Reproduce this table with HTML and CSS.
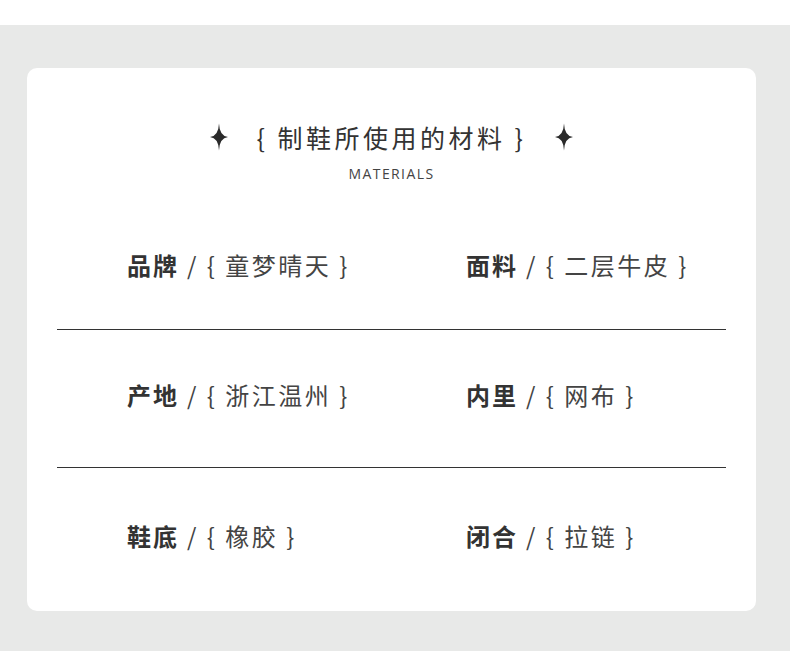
FILE: index.html
```html
<!DOCTYPE html>
<html lang="zh">
<head>
<meta charset="utf-8">
<link rel="stylesheet" href="styles.css">
</head>
<body>
<div class="band">
  <div class="card">
    <div class="header">
      <div class="title-row">
        <svg class="star" viewBox="0 0 20 30"><path d="M10 0 Q10.6 14 20 15 Q10.6 16 10 30 Q9.4 16 0 15 Q9.4 14 10 0Z"/></svg>
        <h1 class="title">{ 制鞋所使用的材料 }</h1>
        <svg class="star" viewBox="0 0 20 30"><path d="M10 0 Q10.6 14 20 15 Q10.6 16 10 30 Q9.4 16 0 15 Q9.4 14 10 0Z"/></svg>
      </div>
      <div class="subtitle">MATERIALS</div>
    </div>
    <div class="rows">
      <div class="row first">
        <div class="item"><span class="label">品牌</span><span class="value">/ { 童梦晴天 }</span></div>
        <div class="item"><span class="label">面料</span><span class="value">/ { 二层牛皮 }</span></div>
      </div>
      <div class="row">
        <div class="item"><span class="label">产地</span><span class="value">/ { 浙江温州 }</span></div>
        <div class="item"><span class="label">内里</span><span class="value">/ { 网布 }</span></div>
      </div>
      <div class="row last">
        <div class="item"><span class="label">鞋底</span><span class="value">/ { 橡胶 }</span></div>
        <div class="item"><span class="label">闭合</span><span class="value">/ { 拉链 }</span></div>
      </div>
    </div>
  </div>
</div>
</body>
</html>
```
FILE: styles.css
```css
* { box-sizing: border-box; }
html, body { margin: 0; padding: 0; background: #ffffff; }
body {
  font-family: "Noto Sans CJK SC", "Noto Sans", sans-serif;
  color: #333;
}
.band {
  margin-top: 25px;
  height: 626px;
  background: #e8e9e8;
  padding: 43px 34px 0 27px;
}
.card {
  background: #ffffff;
  border-radius: 10px;
  height: 543px;
  padding: 51px 30px 0;
}
.header {
  display: flex;
  flex-direction: column;
  align-items: center;
}
.title-row {
  display: flex;
  align-items: center;
  gap: 28px;
  height: 36px;
}
.star {
  width: 18px;
  height: 30px;
  fill: #2a2a2a;
}
.title {
  margin: 0;
  font-weight: 400;
  font-size: 25px;
  line-height: 36px;
  letter-spacing: 3.5px;
  color: #333;
}
.subtitle {
  margin-top: 10px;
  font-family: "Open Sans", "Noto Sans", sans-serif;
  font-size: 14px;
  line-height: 18px;
  letter-spacing: 1.4px;
  color: #444;
}
.rows {
  margin-top: 16px;
}
.row {
  display: grid;
  grid-template-columns: 339px 1fr;
  padding: 50px 0 57px 70px;
  border-bottom: 1px solid #333;
}
.row.first { padding-top: 51px; padding-bottom: 49px; }
.row.last { border-bottom: none; padding-top: 53px; }
.item {
  display: flex;
  align-items: center;
  height: 30px;
  font-size: 24px;
  line-height: 30px;
}
.label {
  font-weight: 700;
  letter-spacing: 2px;
  color: #333;
}
.value {
  margin-left: 8px;
  letter-spacing: 2.5px;
  color: #444;
  white-space: pre;
}
```
